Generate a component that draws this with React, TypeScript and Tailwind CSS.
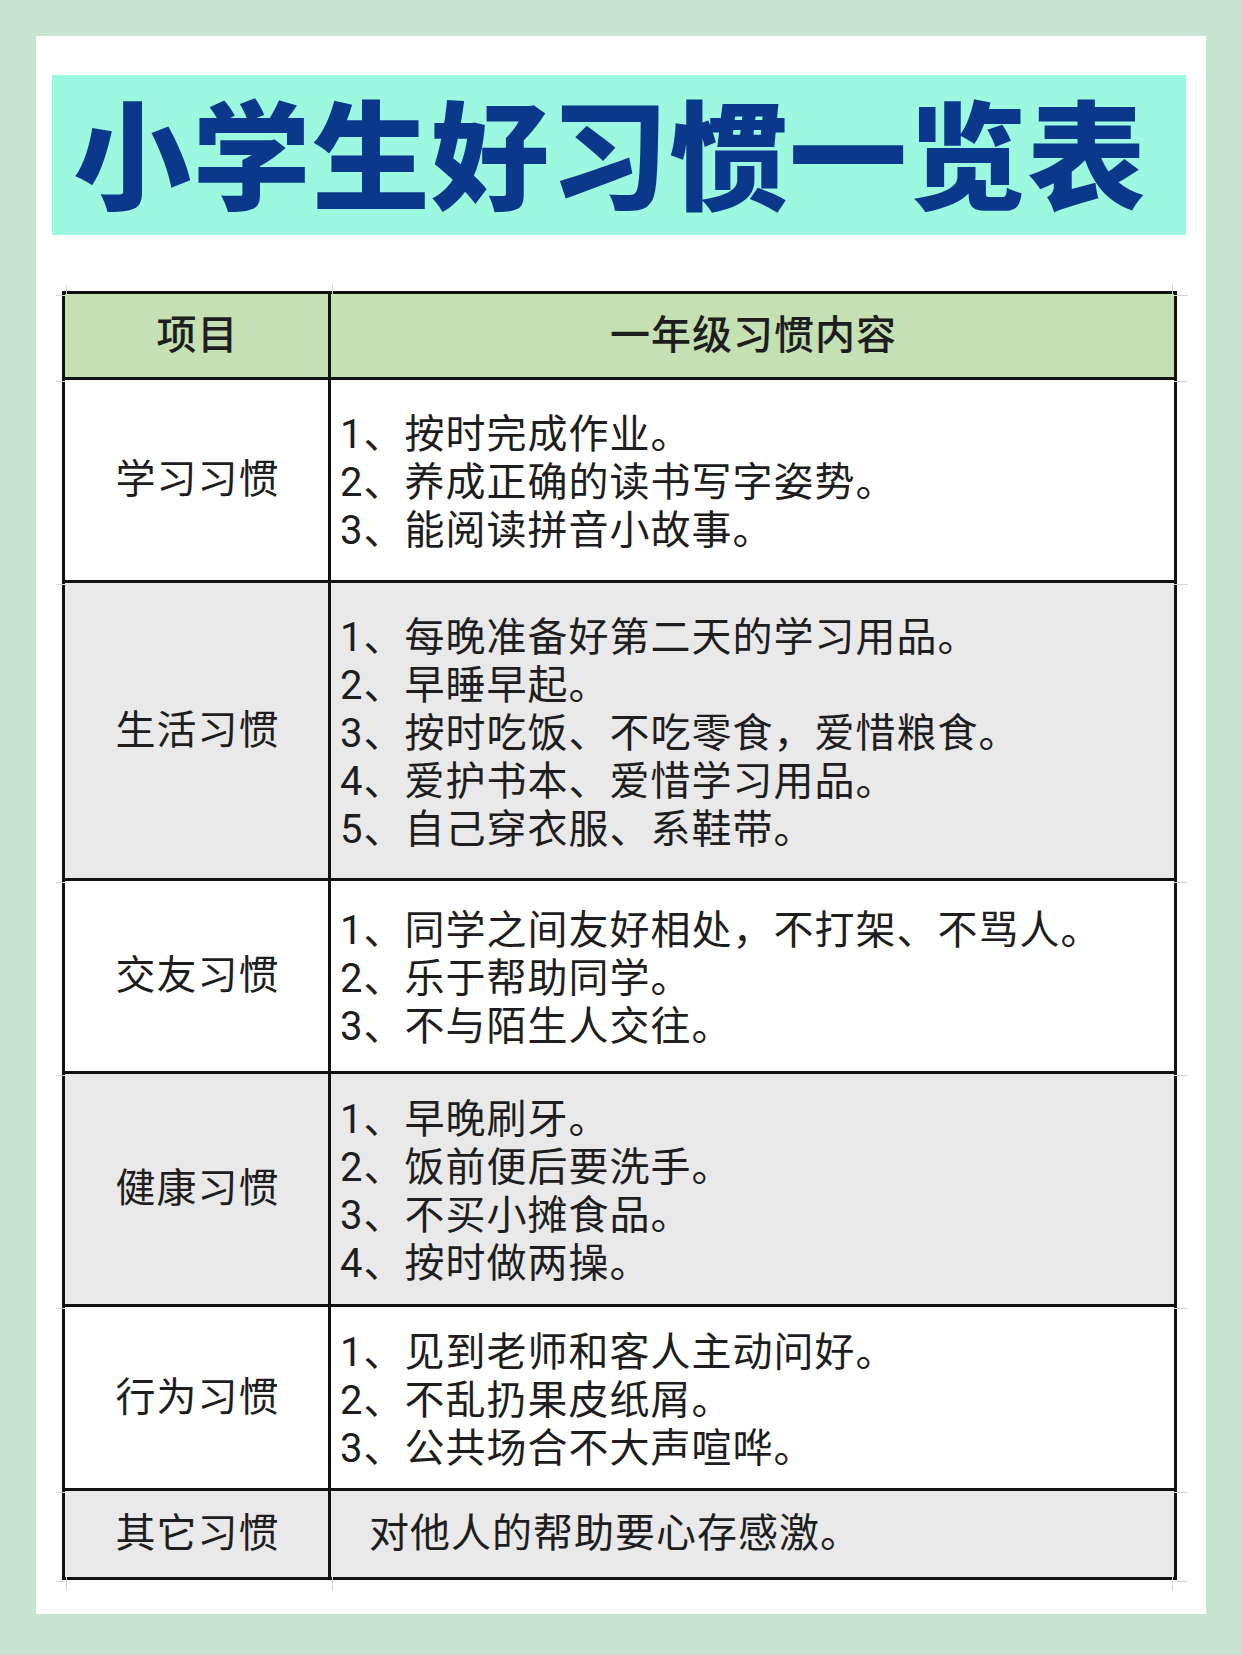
const rows = [
  {
    label: '学习习惯',
    h: 'h-[203px]',
    gray: false,
    items: ['1、按时完成作业。', '2、养成正确的读书写字姿势。', '3、能阅读拼音小故事。'],
  },
  {
    label: '生活习惯',
    h: 'h-[298px]',
    gray: true,
    items: [
      '1、每晚准备好第二天的学习用品。',
      '2、早睡早起。',
      '3、按时吃饭、不吃零食，爱惜粮食。',
      '4、爱护书本、爱惜学习用品。',
      '5、自己穿衣服、系鞋带。',
    ],
  },
  {
    label: '交友习惯',
    h: 'h-[193px]',
    gray: false,
    items: ['1、同学之间友好相处，不打架、不骂人。', '2、乐于帮助同学。', '3、不与陌生人交往。'],
  },
  {
    label: '健康习惯',
    h: 'h-[233px]',
    gray: true,
    items: ['1、早晚刷牙。', '2、饭前便后要洗手。', '3、不买小摊食品。', '4、按时做两操。'],
  },
  {
    label: '行为习惯',
    h: 'h-[184px]',
    gray: false,
    items: ['1、见到老师和客人主动问好。', '2、不乱扔果皮纸屑。', '3、公共场合不大声喧哗。'],
  },
];

// faint spreadsheet grid ticks poking out of the table edges
const lineYs = [0, 86, 289, 587, 780, 1013, 1197, 1286];

function GridTicks() {
  return (
    <>
      {lineYs.map((y) => (
        <div key={'l' + y}>
          <div className="absolute left-[-9px] h-px w-[9px] bg-[#d6d6d6]" style={{ top: y + 1 }} />
          <div className="absolute right-[-14px] h-px w-[14px] bg-[#d6d6d6]" style={{ top: y + 1 }} />
        </div>
      ))}
      <div className="absolute left-[1px] top-[-9px] h-[9px] w-px bg-[#d6d6d6]" />
      <div className="absolute left-[267px] top-[-9px] h-[9px] w-px bg-[#d6d6d6]" />
      <div className="absolute right-[1px] top-[-9px] h-[9px] w-px bg-[#d6d6d6]" />
      <div className="absolute bottom-[-14px] left-[1px] h-[14px] w-px bg-[#d6d6d6]" />
      <div className="absolute bottom-[-14px] left-[267px] h-[14px] w-px bg-[#d6d6d6]" />
      <div className="absolute bottom-[-14px] right-[1px] h-[14px] w-px bg-[#d6d6d6]" />
    </>
  );
}

export default function App() {
  return (
    <div
      className="h-[1655px] w-[1242px] bg-[#c7e5d0] pl-[36px] pt-[36px]"
      style={{ fontFamily: 'Roboto, "Noto Sans CJK SC", sans-serif' }}
    >
      <div className="flex h-[1578px] w-[1170px] flex-col bg-white pl-[16px] pt-[39px]">
        {/* Title banner */}
        <div className="flex h-[160px] w-[1134px] items-center justify-center bg-[#9cf8df] pb-[10px] pr-[18px]">
          <h1
            className="text-[118px] leading-none font-black tracking-[1.3px] text-[#0c388c]"
            style={{ fontFamily: '"Noto Sans CJK SC", sans-serif' }}
          >
            小学生好习惯一览表
          </h1>
        </div>

        {/* Table */}
        <div className="relative ml-[10px] mt-[56px] w-[1115px] border-[3px] border-[#111] text-[40px] leading-[48px] tracking-[1px] text-[#1e1e1e]">
          <GridTicks />
          <div className="flex h-[86px] border-b-[3px] border-[#111] bg-[#c5e0b3] font-medium">
            <div className="flex w-[266px] items-center justify-center border-r-[3px] border-[#111] pl-[2px]">项目</div>
            <div className="flex flex-1 items-center justify-center pl-[2px]">一年级习惯内容</div>
          </div>

          {rows.map((r) => (
            <div
              key={r.label}
              className={`flex border-b-[3px] border-[#111] ${r.h} ${r.gray ? 'bg-[#e9e9e9]' : 'bg-white'}`}
            >
              <div className="flex w-[266px] items-center justify-center border-r-[3px] border-[#111] pl-[2px]">
                {r.label}
              </div>
              <div className="flex flex-1 flex-col justify-center pl-[9px] pt-[6px]">
                {r.items.map((t) => (
                  <div key={t}>{t}</div>
                ))}
              </div>
            </div>
          ))}

          <div className="flex h-[86px] bg-[#e9e9e9]">
            <div className="flex w-[266px] items-center justify-center border-r-[3px] border-[#111] pl-[2px]">
              其它习惯
            </div>
            <div className="flex flex-1 items-center pl-[38px]">对他人的帮助要心存感激。</div>
          </div>
        </div>
      </div>
    </div>
  );
}
